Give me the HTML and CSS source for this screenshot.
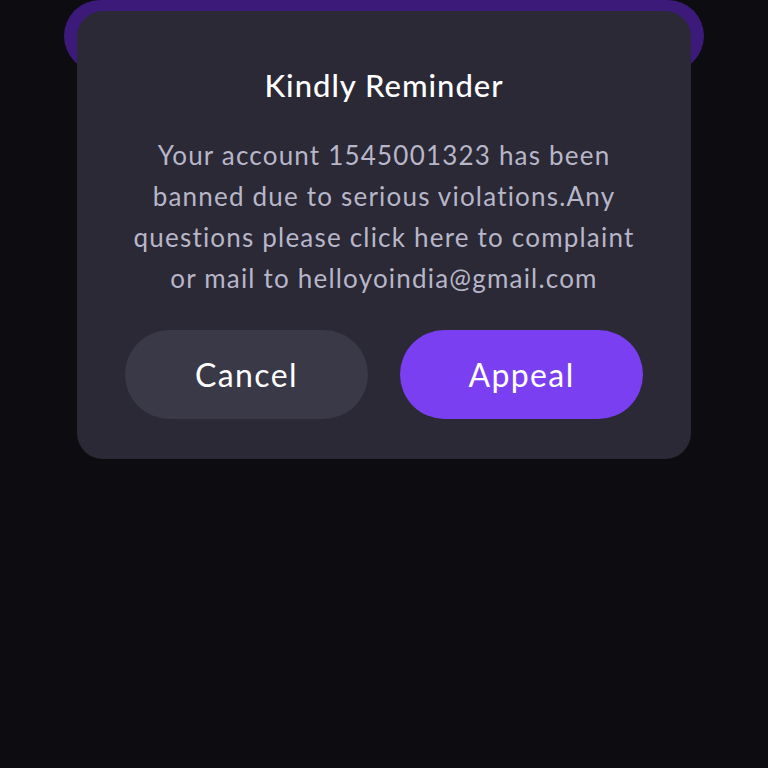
FILE: index.html
```html
<!DOCTYPE html>
<html lang="en">
<head>
    <meta charset="UTF-8">
    <meta name="viewport" content="width=device-width, initial-scale=1.0">
    <title>Kindly Reminder</title>
    <link rel="stylesheet" href="styles.css">
</head>
<body>
    <div class="top-pill"></div>

    <div class="dialog">
        <h1 class="dialog-title">Kindly Reminder</h1>
        <p class="dialog-text">
            Your account 1545001323 has been<br>
            banned due to serious violations.Any<br>
            questions please click here to complaint<br>
            or mail to helloyoindia@gmail.com
        </p>
        <div class="dialog-buttons">
            <button class="button button-cancel">Cancel</button>
            <button class="button button-appeal">Appeal</button>
        </div>
    </div>
</body>
</html>
```

FILE: styles.css
```css
body {
    font-family: 'Lato', 'Noto Sans', sans-serif;
    background-color: #0c0c11;
    margin: 0;
    height: 100vh;
    overflow: hidden;
}

.top-pill {
    height: 72px;
    margin: 0 64px;
    border-radius: 36px;
    background-color: #3c1a7a;
}

.dialog {
    position: relative;
    margin: -61px 77px 0;
    background-color: #2a2935;
    border-radius: 26px;
    padding: 50px 48px 40px;
    text-align: center;
}

.dialog-title {
    font-size: 31px;
    font-weight: 500;
    color: #ffffff;
    margin: 0;
    line-height: 48px;
    letter-spacing: 1px;
}

.dialog-text {
    font-size: 26px;
    line-height: 41px;
    color: #b8b6c9;
    margin: 26px -20px 31px;
    letter-spacing: 1.2px;
}

.dialog-buttons {
    display: flex;
    gap: 32px;
}

.button {
    flex: 1;
    height: 89px;
    border: none;
    border-radius: 45px;
    font-family: inherit;
    font-size: 32px;
    letter-spacing: 1.4px;
    color: #ffffff;
    cursor: pointer;
}

.button-cancel {
    background-color: #3a3947;
}

.button-appeal {
    background-color: #7b3ff2;
}
```
